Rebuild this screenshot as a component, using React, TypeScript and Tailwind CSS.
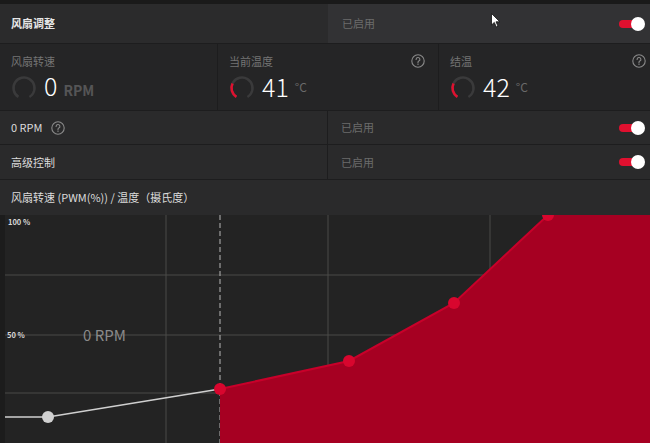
import React from "react";

const font = { fontFamily: '"Noto Sans CJK SC", "Noto Sans", sans-serif' };

function Toggle() {
  return (
    <div className="relative w-[26px] h-[14px] flex items-center">
      <div className="w-[22px] h-[8px] rounded-full bg-[#e0102f]" />
      <div className="absolute right-0 top-0 w-[14px] h-[14px] rounded-full bg-white" />
    </div>
  );
}

function Help() {
  return (
    <svg width="14" height="14" viewBox="0 0 14 14">
      <circle cx="7" cy="7" r="6.2" fill="none" stroke="#8a8a8a" strokeWidth="1.1" />
      <path d="M5.1 5.4a1.9 1.9 0 1 1 2.7 1.7c-.6.3-.8.6-.8 1.2v.4" fill="none" stroke="#8a8a8a" strokeWidth="1.1" strokeLinecap="round" />
      <circle cx="7" cy="10.3" r="0.7" fill="#8a8a8a" />
    </svg>
  );
}

function Gauge({ pct }: { pct: number }) {
  // ring open at the bottom, red arc sweeping from lower-left
  const r = 10.5;
  const c = 2 * Math.PI * r;
  const span = 0.82;
  return (
    <svg width="26" height="26" viewBox="0 0 26 26">
      <g transform="rotate(122 13 13)">
        <circle cx="13" cy="13" r={r} fill="none" stroke="#3a3a3b" strokeWidth="2.5" strokeDasharray={`${c * span} ${c}`} />
        {pct > 0 && (
          <circle cx="13" cy="13" r={r} fill="none" stroke="#e0102f" strokeWidth="2.5" strokeDasharray={`${c * span * pct} ${c}`} />
        )}
      </g>
    </svg>
  );
}

function Stat({ label, value, unit, pct, help, bigUnit, className }: { label: string; value: string; unit: string; pct: number; help?: boolean; bigUnit?: boolean; className: string }) {
  return (
    <div className={`${className} flex flex-col pl-[11px] pt-[8px] bg-[#252526]`}>
      <div className="flex items-center justify-between h-[18px]">
        <span className="text-[11px] text-[#747474]">{label}</span>
        {help && <Help />}
      </div>
      <div className="flex items-center gap-[7px] mt-[5px]">
        <Gauge pct={pct} />
        <div className="flex items-baseline gap-[6px] -mt-[2px]">
          <span className="text-[25px] leading-none text-white font-light">{value}</span>
          {bigUnit ? (
            <span className="text-[14px] font-bold text-[#555556]">{unit}</span>
          ) : (
            <span className="text-[12px] text-[#6a6a6a] relative -top-[5px]">{unit}</span>
          )}
        </div>
      </div>
    </div>
  );
}

function ToggleRow({ children, h }: { children: React.ReactNode; h: string }) {
  return (
    <div className={`flex ${h} border-b border-[#1d1d1e] bg-[#2a2a2b]`}>
      <div className="w-[328px] flex items-center pl-[11px] gap-[9px] border-r border-[#1d1d1e]">{children}</div>
      <div className="flex-1 flex items-center justify-between pl-[13px] pr-[5px]">
        <span className="text-[11px] text-[#6c6c6c]">已启用</span>
        <Toggle />
      </div>
    </div>
  );
}

function Chart() {
  const pts: [number, number][] = [
    [220, 174],
    [349, 146],
    [454, 88],
    [548, 0],
  ];
  const poly = [...pts, [650, 0], [650, 228], [220, 228]].map((p) => p.join(",")).join(" ");
  return (
    <svg width="650" height="228" viewBox="0 0 650 228" className="block">
      <rect x="0" y="0" width="650" height="228" fill="#232323" />
      <rect x="0" y="0" width="5" height="228" fill="#1c1c1c" />
      {[60, 120, 178].map((y) => (
        <line key={y} x1="5" x2="650" y1={y} y2={y} stroke="#4a4a48" strokeWidth="1" />
      ))}
      {[166, 328, 490].map((x) => (
        <line key={x} x1={x} x2={x} y1="0" y2="228" stroke="#4a4a48" strokeWidth="1" />
      ))}
      <line x1="220" x2="220" y1="0" y2="228" stroke="#b8b8b8" strokeWidth="1" strokeDasharray="5 3" />
      <text x="8" y="10" fontSize="7.5" fontWeight="700" fill="#d8d8d8" style={font}>100 %</text>
      <text x="7" y="123" fontSize="7.5" fontWeight="700" fill="#d8d8d8" style={font}>50 %</text>
      <text x="83" y="126" fontSize="15" fill="#8a8a8a" style={font}>0 RPM</text>
      <polyline points="5,202 48,202 220,174" fill="none" stroke="#cfcfcf" strokeWidth="1.6" />
      <circle cx="48" cy="202" r="6" fill="#d0d0d0" />
      <polygon points={poly} fill="#a60022" />
      <polyline points={pts.map((p) => p.join(",")).join(" ")} fill="none" stroke="#c8002a" strokeWidth="2" />
      {pts.map(([x, y]) => (
        <circle key={x} cx={x} cy={y} r="6" fill="#d8062e" />
      ))}
    </svg>
  );
}

export default function App() {
  return (
    <div className="w-[650px] h-[443px] overflow-hidden bg-[#1b1b1b] relative" style={font}>
      <div className="h-[4px] bg-[#1a1a1a]" />
      {/* header */}
      <div className="flex h-[40px] border-b border-[#1d1d1e]">
        <div className="w-[328px] flex items-center pl-[11px] bg-[#2b2b2c]">
          <span className="text-[11px] font-bold text-[#e6e6e6]">风扇调整</span>
        </div>
        <div className="flex-1 flex items-center justify-between pl-[14px] pr-[5px] bg-[#323234]">
          <span className="text-[11px] text-[#6c6c6c]">已启用</span>
          <Toggle />
        </div>
      </div>
      {/* stats */}
      <div className="flex h-[67px] gap-px bg-[#1d1d1e] border-b border-[#1d1d1e]">
        <Stat className="w-[217px] pr-[13px]" label="风扇转速" value="0" unit="RPM" pct={0} bigUnit />
        <Stat className="w-[220px] pr-[13px]" label="当前温度" value="41" unit="°C" pct={0.28} help />
        <Stat className="flex-1 pr-[4px]" label="结温" value="42" unit="°C" pct={0.28} help />
      </div>
      <ToggleRow h="h-[34px]">
        <span className="text-[11px] text-[#dcdcdc]">0 RPM</span>
        <Help />
      </ToggleRow>
      <ToggleRow h="h-[35px]">
        <span className="text-[11px] text-[#dcdcdc]">高级控制</span>
      </ToggleRow>
      <div className="h-[35px] flex items-center pl-[11px] bg-[#2a2a2b]">
        <span className="text-[11px] text-[#dcdcdc]">风扇转速 (PWM(%)) / 温度（摄氏度）</span>
      </div>
      <Chart />
      {/* mouse cursor */}
      <svg className="absolute left-[491px] top-[13px]" width="10" height="15" viewBox="0 0 10 15">
        <path d="M0.5 0.5 L0.5 12 L3.3 9.4 L5.3 14 L7 13.3 L5 8.8 L8.8 8.8 Z" fill="#ffffff" stroke="#111" strokeWidth="0.8" />
      </svg>
    </div>
  );
}
